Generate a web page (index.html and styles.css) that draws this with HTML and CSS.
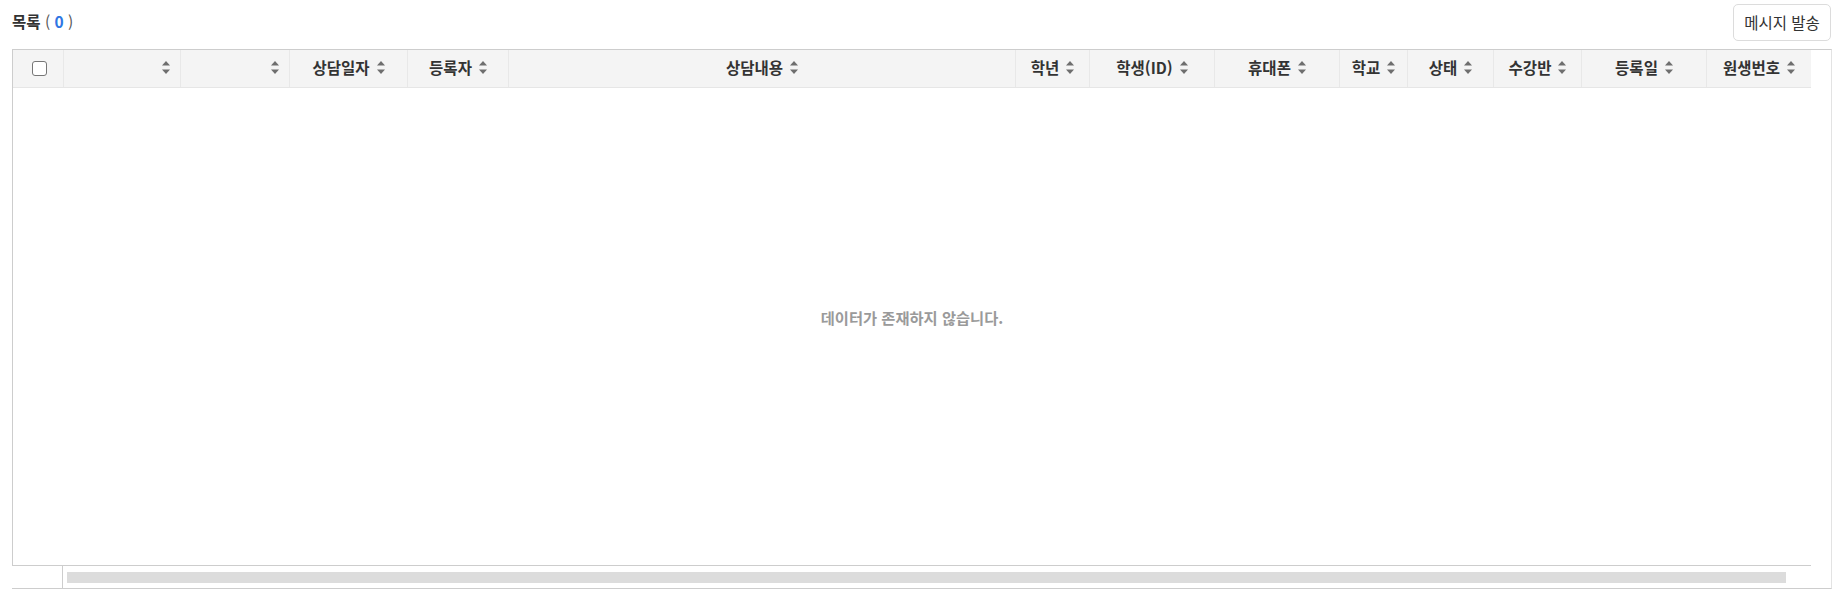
FILE: index.html
```html
<!DOCTYPE html>
<html lang="ko">
<head>
<meta charset="utf-8">
<title>목록</title>
<link rel="stylesheet" href="styles.css">
</head>
<body>
<div class="page">
  <div class="toolbar">
    <div class="title"><span class="title-label">목록</span> <span class="paren">(</span> <span class="count">0</span> <span class="paren">)</span></div>
    <button class="btn" type="button">메시지 발송</button>
  </div>
  <div class="grid">
    <div class="grid-main">
      <div class="table-wrap">
        <div class="thead">
          <div class="th th-check c1"><span class="checkbox"></span></div>
          <div class="th th-end c2"><svg class="sort" viewBox="0 0 8 13"><path d="M0 4.5 4 0 8 4.5Z"/><path d="M0 8.5 4 13 8 8.5Z"/></svg></div>
          <div class="th th-end c3"><svg class="sort" viewBox="0 0 8 13"><path d="M0 4.5 4 0 8 4.5Z"/><path d="M0 8.5 4 13 8 8.5Z"/></svg></div>
          <div class="th c4"><span>상담일자</span><svg class="sort" viewBox="0 0 8 13"><path d="M0 4.5 4 0 8 4.5Z"/><path d="M0 8.5 4 13 8 8.5Z"/></svg></div>
          <div class="th c5"><span>등록자</span><svg class="sort" viewBox="0 0 8 13"><path d="M0 4.5 4 0 8 4.5Z"/><path d="M0 8.5 4 13 8 8.5Z"/></svg></div>
          <div class="th c6"><span>상담내용</span><svg class="sort" viewBox="0 0 8 13"><path d="M0 4.5 4 0 8 4.5Z"/><path d="M0 8.5 4 13 8 8.5Z"/></svg></div>
          <div class="th c7"><span>학년</span><svg class="sort" viewBox="0 0 8 13"><path d="M0 4.5 4 0 8 4.5Z"/><path d="M0 8.5 4 13 8 8.5Z"/></svg></div>
          <div class="th c8"><span>학생(ID)</span><svg class="sort" viewBox="0 0 8 13"><path d="M0 4.5 4 0 8 4.5Z"/><path d="M0 8.5 4 13 8 8.5Z"/></svg></div>
          <div class="th c9"><span>휴대폰</span><svg class="sort" viewBox="0 0 8 13"><path d="M0 4.5 4 0 8 4.5Z"/><path d="M0 8.5 4 13 8 8.5Z"/></svg></div>
          <div class="th c10"><span>학교</span><svg class="sort" viewBox="0 0 8 13"><path d="M0 4.5 4 0 8 4.5Z"/><path d="M0 8.5 4 13 8 8.5Z"/></svg></div>
          <div class="th c11"><span>상태</span><svg class="sort" viewBox="0 0 8 13"><path d="M0 4.5 4 0 8 4.5Z"/><path d="M0 8.5 4 13 8 8.5Z"/></svg></div>
          <div class="th c12"><span>수강반</span><svg class="sort" viewBox="0 0 8 13"><path d="M0 4.5 4 0 8 4.5Z"/><path d="M0 8.5 4 13 8 8.5Z"/></svg></div>
          <div class="th c13"><span>등록일</span><svg class="sort" viewBox="0 0 8 13"><path d="M0 4.5 4 0 8 4.5Z"/><path d="M0 8.5 4 13 8 8.5Z"/></svg></div>
          <div class="th c14 last"><span>원생번호</span><svg class="sort" viewBox="0 0 8 13"><path d="M0 4.5 4 0 8 4.5Z"/><path d="M0 8.5 4 13 8 8.5Z"/></svg></div>
        </div>
        <div class="tbody">
          <div class="empty">데이터가 존재하지 않습니다.</div>
        </div>
      </div>
      <div class="vbar"></div>
    </div>
    <div class="grid-foot">
      <div class="foot-left"></div>
      <div class="foot-track"><div class="thumb"></div></div>
    </div>
  </div>
</div>
</body>
</html>
```

FILE: styles.css
```css
* { box-sizing: border-box; }
html, body { margin: 0; padding: 0; background: #fff; }
body {
  font-family: "Noto Sans CJK KR", "Noto Sans", sans-serif;
  font-size: 15px;
  color: #333;
}
.page { padding: 0 12px; width: 1844px; }

.toolbar {
  height: 44px;
  display: flex;
  align-items: center;
  justify-content: space-between;
}
.title { font-size: 15.5px; line-height: 20px; margin-top: -3px; padding-left: 0; color: #333; }
.title-label { font-weight: 700; }
.paren { color: #555; }
.count { color: #2f76e3; font-weight: 700; }

.btn {
  height: 37px;
  width: 98px;
  margin-right: 1px;
  padding: 0;
  border: 1px solid #dcdcdc;
  border-radius: 5px;
  background: #fff;
  font-family: inherit;
  font-size: 15.5px;
  color: #333;
}

.grid {
  margin-top: 5px;
  width: 1820px;
  border-top: 1px solid #cdcdcd;
  border-right: 1px solid #e3e3e3;
  border-bottom: 1px solid #cdcdcd;
}
.grid-main { display: flex; }
.table-wrap {
  width: 1799px;
  border-left: 1px solid #cdcdcd;
  border-bottom: 1px solid #cdcdcd;
}
.vbar { width: 19px; }

.thead {
  display: flex;
  height: 38px;
  background: #f4f4f4;
  border-bottom: 1px solid #e6e6e6;
}
.th {
  display: flex;
  align-items: center;
  justify-content: center;
  gap: 7px;
  height: 37px;
  padding-bottom: 3px;
  border-right: 1px solid #e8e8e8;
  font-weight: 700;
  font-size: 15.5px;
  color: #333;
  white-space: nowrap;
}
.th.last { border-right: none; }
.th-end { justify-content: flex-end; padding-right: 10px; }
.th-check { justify-content: center; padding-left: 2px; padding-bottom: 0; }

.sort { width: 8px; height: 13px; fill: #6e6e6e; flex: none; margin-top: 0; }

.checkbox {
  display: block;
  width: 15px;
  height: 15px;
  border: 1px solid #767676;
  border-radius: 3px;
  background: #fff;
  margin-top: -1px;
}

.c1 { width: 51px; }
.c2 { width: 117px; }
.c3 { width: 109px; }
.c4 { width: 118px; }
.c5 { width: 101px; }
.c6 { width: 507px; }
.c7 { width: 74px; }
.c8 { width: 125px; }
.c9 { width: 125px; }
.c10 { width: 68px; }
.c11 { width: 86px; }
.c12 { width: 88px; }
.c13 { width: 125px; }
.c14 { width: 104px; }

.tbody {
  height: 477px;
  display: flex;
  align-items: center;
  justify-content: center;
  padding-bottom: 20px;
}
.empty {
  font-size: 15.3px;
  font-weight: 700;
  color: #9a9a9a;
}

.grid-foot { display: flex; height: 22px; }
.foot-left { width: 51px; border-right: 1px solid #cdcdcd; }
.foot-track { flex: 1; padding: 6px 45px 5px 4px; }
.thumb { height: 11px; background: #dcdcdc; }
```
